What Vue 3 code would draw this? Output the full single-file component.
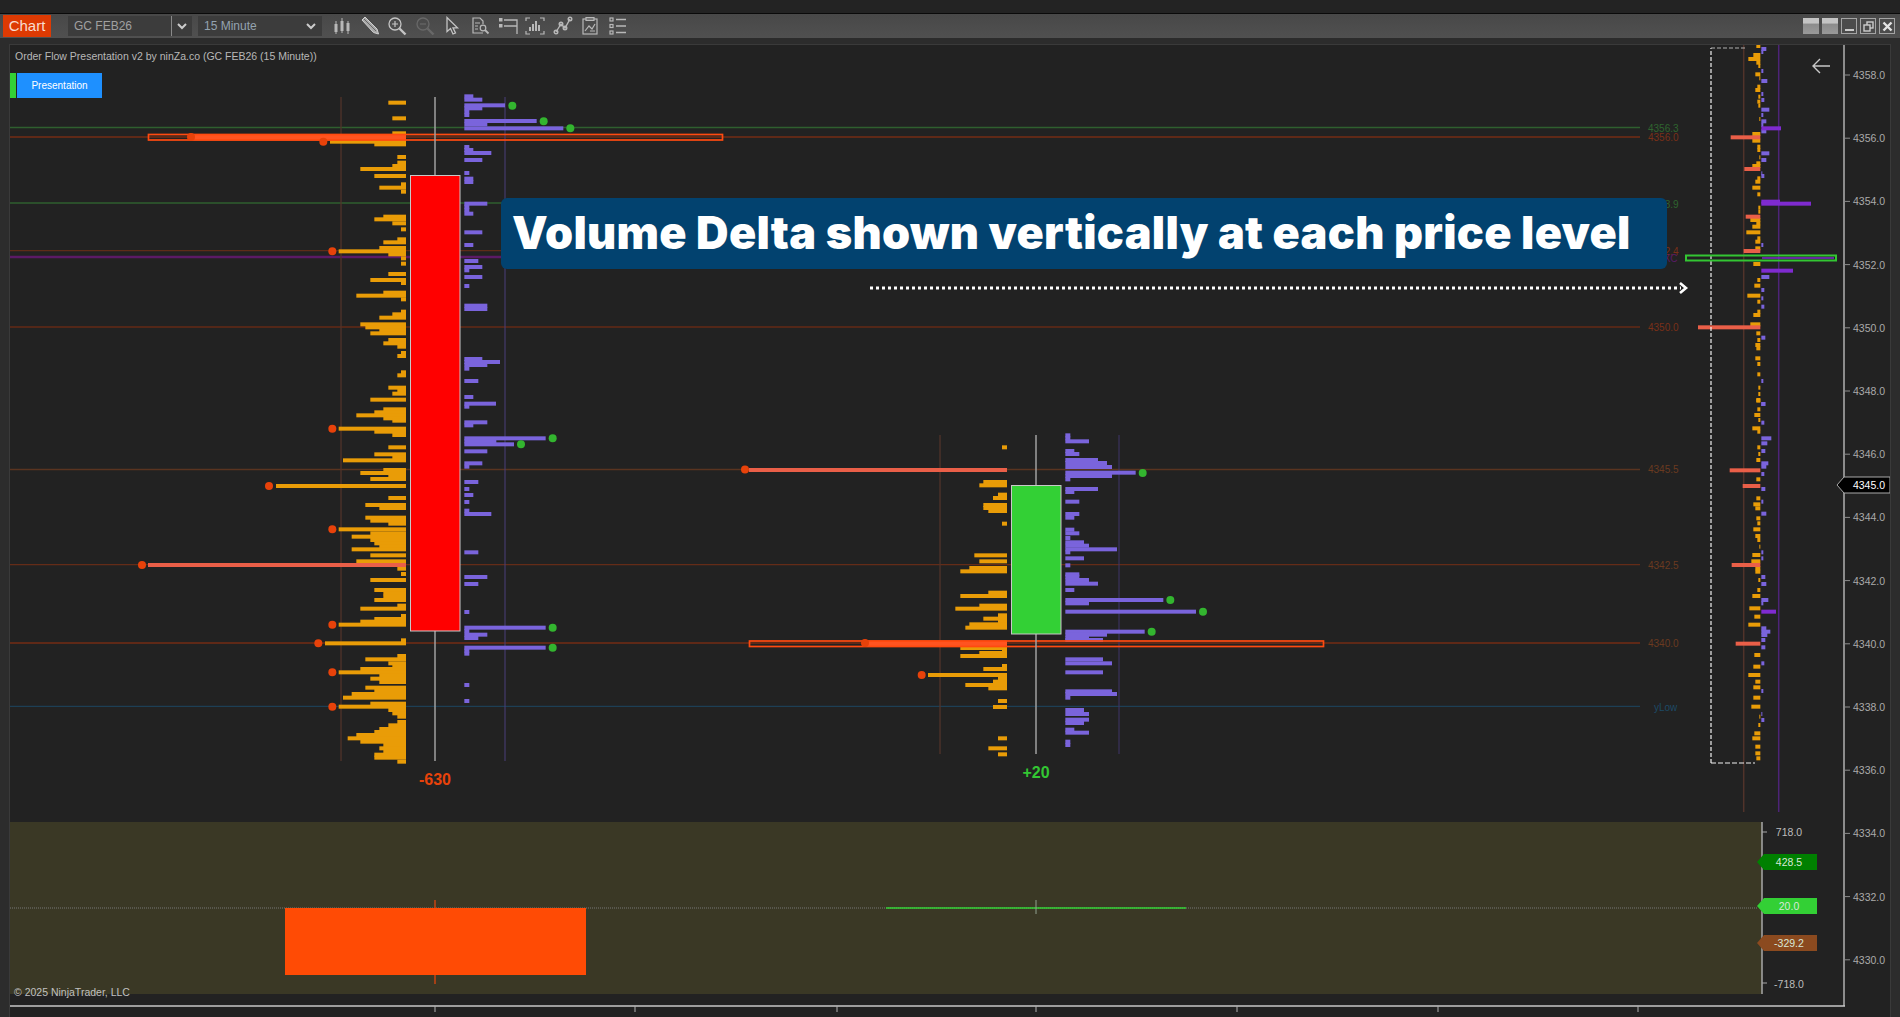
<script setup>
import { computed } from "vue";

// row lists are [y, x] pairs read off a crop, x is the free end of the bar
const toRects = (ox, oy, base, dir, pairs, color) => {
  const out = [];
  for (let i = 0; i < pairs.length; i += 2) {
    const y = oy + pairs[i] / 3;
    const x = ox + pairs[i + 1] / 3;
    const b = ox + base / 3;
    out.push({ x: dir < 0 ? x : b, y: y - 2, w: Math.abs(x - b), h: 4, color });
  }
  return out;
};

const ORANGE = "#e99c07";
const PURPLE = "#7a64dc";
const CORAL = "#ea5f48";
const VIOLET = "#7f2bd0";

const orange1a = [38,265,85,277,130,277,155,90,163,223,201,292,218,292,228,277,237,181,258,223,283,303,293,238,305,303,380,250,388,223,400,277,418,303,448,292,457,250,474,238,484,116,493,265,505,303,521,303,552,265,570,211,579,303,608,250,617,169,628,303,665,303,673,277,683,238,703,181,712,196,721,238,730,211,750,265,760,250,770,292,789,303,798,292,847,303,856,292,893,265,902,292,911,277,929,211,958,250,967,223,976,169,985,250];
const orange1b = [2,277,26,116,35,223,45,277,82,265,103,223,112,277,121,129,150,250,159,181,168,265,177,211,198,-72,234,265,255,196,264,238,293,196,302,211,311,265,328,116,340,211,350,155,360,211,370,223,379,238,388,155,406,211,424,169,446,292,462,303,480,211,510,223,520,250,530,250,540,223,557,292,566,181,588,303,597,223,605,181,614,116,661,303,670,75,708,292,718,196,730,265,738,277,747,181,757,116,766,238,776,211,786,238,803,196,812,223,822,155,833,129,851,211,860,116,870,265,880,277,890,292,906,292,916,265,927,238,936,223,945,169,955,143,965,181,975,250,985,238,995,250,1004,223,1013,223,1025,292];
const purple1a = [19,520,29,547,46,615,55,547,65,508,75,508,93,710,103,562,115,790,171,508,180,520,189,574,210,547,249,508,266,520,276,520,341,562,350,508,360,508,371,520,427,547,465,520,513,535,531,547,541,508,561,547,588,508,647,562,657,562,807,547,816,600,825,562,836,508,873,535,921,520,941,588,950,508,997,562,1006,520];
const purple1b = [55,737,64,589,73,642,94,562,130,547,140,508,186,535,207,508,225,520,246,508,272,508,282,574,397,535,471,562,492,535,576,508,623,737,633,508,644,562,654,535,683,737,692,508,701,508,795,508,843,508];
const orange2 = [82,306,186,250,196,238,224,294,234,279,255,250,264,250,273,265,311,306,406,223,424,238,444,208,454,181,518,265,528,181,557,238,566,166,586,294,596,250,605,294,613,208,623,196,684,181,690,306,699,238,708,181,738,306,747,250,765,84,775,294,785,279,795,196,805,265,843,294,861,279,955,294,985,265,1003,294];
const purple2 = [46,511,55,511,64,567,93,523,102,538,120,594,129,621,141,636,158,707,168,636,178,511,207,594,216,523,245,538,282,538,293,523,329,523,340,538,354,511,367,552,377,567,388,651,397,511,415,552,436,511,463,538,470,538,480,567,491,594,510,523,540,790,550,567,575,888,635,734,644,621,654,567,660,609,718,609,730,636,757,609,814,636,822,651,833,511,870,552,882,567,899,567,909,552,929,523,938,567,965,511,975,511];
const miniOrangeA = [18,229,45,220,57,205,68,229,78,235,103,226,115,238,140,232,150,226,170,235,185,232,197,235,237,238,282,217,302,217,320,232,330,232,352,238,370,229,378,217,415,232,425,226,443,217,463,232,503,235,515,235,540,211,550,229,560,217,577,199,595,232,605,226,625,226,672,220,720,232,737,223,767,202,785,232,815,232,825,220,853,211,880,229,900,232,915,226,925,229,955,226,972,232,1003,232,1043,235,1062,235,1080,229];
const miniOrangeB = [2,229,28,232,45,223,60,235,85,217,95,232,142,232,162,235,180,229,238,229,295,229,313,220,325,226,355,229,370,232,388,220,408,226,420,232,440,238,465,217,484,214,505,226,515,226,540,235,570,232,588,217,625,208,650,223,674,205,765,223,800,220,825,205,845,226,862,220,893,220,920,214,950,238,975,235,1000,223,1015,217,1040,226,1060,226,1075,229];
const miniPurpleA = [27,259,36,250,93,250,123,262,162,250,180,253,209,268,225,250,244,259,255,250,274,259,340,268,360,259,400,247,408,253,615,250,711,268,750,253,775,250,800,253,893,256,1023,250,1092,256];
const miniPurpleB = [12,256,68,253,115,274,130,262,153,256,190,265,200,259,222,253,267,256,305,250,341,259,457,250,475,250,531,256,552,259,600,265,610,250,685,259,695,271,705,262,720,256,742,256,790,253,873,250,942,247,960,253];

const bars = computed(() => [
  ...toRects(300, 90, 318, -1, orange1a, ORANGE),
  ...toRects(300, 420, 318, -1, orange1b, ORANGE),
  ...toRects(300, 90, 493, 1, purple1a, PURPLE),
  ...toRects(300, 420, 493, 1, purple1b, PURPLE),
  ...toRects(900, 420, 321, -1, orange2, ORANGE),
  ...toRects(900, 420, 496, 1, purple2, PURPLE),
  ...toRects(1680, 40, 241, -1, miniOrangeA, ORANGE),
  ...toRects(1680, 400, 241, -1, miniOrangeB, ORANGE),
  ...toRects(1680, 40, 244, 1, miniPurpleA, PURPLE),
  ...toRects(1680, 400, 244, 1, miniPurpleB, PURPLE),
  ...toRects(1680, 40, 241, -1, [292,152,387,193,530,197,633,191,862,54], CORAL),
  ...toRects(1680, 400, 241, -1, [211,149,258,188,495,155,731,167], CORAL),
  ...toRects(1680, 40, 244, 1, [265,303,485,300,491,393,692,339], VIOLET),
  ...toRects(1680, 400, 244, 1, [635,288], VIOLET),
  { x: 148, y: 563, w: 258, h: 4, color: CORAL },
  { x: 749, y: 468, w: 258, h: 4, color: CORAL },
]);

const pts = (ox, oy, list) => {
  const out = [];
  for (let i = 0; i < list.length; i += 2) out.push({ x: ox + list[i] / 3, y: oy + list[i + 1] / 3 });
  return out;
};
const redDots = [
  ...pts(300, 90, [70,155,97,484]),
  ...pts(300, 420, [97,26,97,328,97,614,55,670,97,757,97,860]),
  ...pts(900, 420, [65,765]),
  { x: 142, y: 565 },
  { x: 269, y: 486 },
  { x: 191, y: 137 },
  { x: 865, y: 643 },
  { x: 745, y: 469.5 },
];
const greenDots = [
  ...pts(300, 90, [637,47,731,94,811,115]),
  ...pts(300, 420, [758,55,663,73,758,623,758,683]),
  ...pts(900, 420, [728,159,811,540,909,575,755,635]),
];

const hLines = [
  { y: 127.5, color: "#2f5f2f" },
  { y: 137, color: "#742c14" },
  { y: 203, color: "#2f5f2f" },
  { y: 250.7, color: "#5f2c18" },
  { y: 257, color: "#5b1a66", w: 2.6 },
  { y: 327, color: "#642a16" },
  { y: 469.5, color: "#5a3420" },
  { y: 564.7, color: "#642c18" },
  { y: 643, color: "#742c14" },
  { y: 706.3, color: "#1d3f55" },
];
const lineLabels = [
  { y: 132, t: "4356.3", c: "#2f652f" },
  { y: 141, t: "4356.0", c: "#7a3018" },
  { y: 208, t: "4353.9", c: "#2f652f" },
  { y: 255, t: "4352.4", c: "#7a3018" },
  { y: 262, t: "PXC", c: "#5b1a66", x: 1657 },
  { y: 331, t: "4350.0", c: "#7a3018" },
  { y: 473, t: "4345.5", c: "#6b3a20" },
  { y: 569, t: "4342.5", c: "#6b3a20" },
  { y: 647, t: "4340.0", c: "#6b3a20" },
  { y: 711, t: "yLow", c: "#1d4a66", x: 1654 },
];

const priceTicks = [];
for (let i = 0; i < 15; i++) {
  priceTicks.push({ y: 75 + i * 63.2, t: (4358 - i * 2).toFixed(1) });
}
const timeTicks = [435, 635, 837, 1036, 1237, 1438, 1638];
const tag = (y) => `1764,${y - 8} 1817,${y - 8} 1817,${y + 8} 1764,${y + 8} 1757,${y}`;
</script>

<template>
  <div class="window">
    <div class="topband"></div>
    <div class="toolbar">
      <div class="tab">Chart</div>
      <div class="instrument">
        <span class="instrument-name">GC FEB26</span>
        <span class="instrument-arrow">
          <svg width="10" height="7" viewBox="0 0 10 7"><path d="M1 1l4 4 4-4" fill="none" stroke="#ccc" stroke-width="2" /></svg>
        </span>
      </div>
      <div class="interval">
        <span>15 Minute</span>
        <svg width="10" height="7" viewBox="0 0 10 7"><path d="M1 1l4 4 4-4" fill="none" stroke="#ccc" stroke-width="2" /></svg>
      </div>
      <div class="tools">
        <svg width="20" height="20" viewBox="0 0 20 20" fill="#b8b8b8" stroke="#b8b8b8">
          <path d="M4 5v13M10 2v15M16 5v13" stroke-width="1" /><rect x="2.5" y="8" width="3" height="8" stroke="none" /><rect x="8.5" y="5" width="3" height="10" stroke="none" /><rect x="14.5" y="7" width="3" height="8" stroke="none" />
        </svg>
        <svg width="20" height="20" viewBox="0 0 20 20">
          <path d="M2 4l3-3 12 12 1.5 5-5-1.5z" fill="#a8a8a8" stroke="#d0d0d0" stroke-width="1" /><path d="M4 3l12 12" stroke="#666" stroke-width="1" />
        </svg>
        <svg width="20" height="20" viewBox="0 0 20 20" fill="none" stroke="#c4c4c4">
          <circle cx="8" cy="8" r="6" stroke-width="1.3" /><path d="M5 8h6M8 5v6" stroke-width="1.2" /><path d="M12.5 12.5l6 6" stroke-width="2.4" />
        </svg>
        <svg width="20" height="20" viewBox="0 0 20 20" fill="none" stroke="#686868">
          <circle cx="8" cy="8" r="6" stroke-width="1.3" /><path d="M5 8h6" stroke-width="1.2" /><path d="M12.5 12.5l6 6" stroke-width="2.4" />
        </svg>
        <svg width="20" height="20" viewBox="0 0 20 20">
          <path d="M5 1.5v14l3.5-3 2.5 5.5 2.5-1-2.5-5.2h4.5z" fill="#4a4a4a" stroke="#c4c4c4" stroke-width="1.3" />
        </svg>
        <svg width="20" height="20" viewBox="0 0 20 20" fill="none" stroke="#b8b8b8" stroke-width="1.2">
          <path d="M13 17H3V2h7l3 3v3" /><path d="M5 7h5M5 10h3M5 13h3" /><circle cx="13" cy="12" r="2.8" /><path d="M15 14l3.5 3.5" stroke-width="1.8" />
        </svg>
        <svg width="20" height="20" viewBox="0 0 20 20" fill="none" stroke="#b8b8b8">
          <rect x="1" y="2" width="3.5" height="3.5" fill="#b8b8b8" stroke="none" /><rect x="1" y="8" width="3.5" height="3.5" fill="#b8b8b8" stroke="none" />
          <path d="M6 4h13v14M6 10h13" stroke-width="1.3" />
        </svg>
        <svg width="20" height="20" viewBox="0 0 20 20" fill="none" stroke="#b8b8b8" stroke-width="1.2">
          <path d="M1 5V2h4M15 2h4v3M1 15v3h4M15 18h4v-3" />
          <path d="M5 15v-4M8 15V8M11 15V5M14 15V9" stroke-width="2" />
        </svg>
        <svg width="20" height="20" viewBox="0 0 20 20" fill="none" stroke="#b8b8b8" stroke-width="1.4">
          <path d="M3 16l5-8 4 4 5-9" /><circle cx="3" cy="16" r="1.8" /><circle cx="8" cy="8" r="1.8" /><circle cx="12" cy="12" r="1.8" /><circle cx="17" cy="3" r="1.8" />
        </svg>
        <svg width="20" height="20" viewBox="0 0 20 20" fill="none" stroke="#b8b8b8" stroke-width="1.2">
          <rect x="3" y="3" width="14" height="15" /><path d="M6 1.5h8v3H6z" fill="#777" /><path d="M5 15l4-5 3 3 3-5M10 15h5" />
        </svg>
        <svg width="20" height="20" viewBox="0 0 20 20" fill="none" stroke="#b8b8b8" stroke-width="1.2">
          <rect x="2" y="2" width="3" height="3" /><rect x="2" y="8.5" width="3" height="3" /><rect x="2" y="15" width="3" height="3" /><path d="M8 3.5h10M8 10h10M8 16.5h10" stroke-width="1.5" />
        </svg>
      </div>
      <div class="win-buttons">
        <span class="win-btn blank"></span>
        <span class="win-btn blank"></span>
        <span class="win-btn">
          <svg width="11" height="11" viewBox="0 0 11 11"><path d="M1 9h9" stroke="#ccc" stroke-width="2" /></svg>
        </span>
        <span class="win-btn">
          <svg width="11" height="11" viewBox="0 0 11 11" fill="none" stroke="#ccc" stroke-width="1.4"><rect x="4" y="1" width="6" height="6" /><rect x="1" y="4" width="6" height="6" fill="#4c4c4c" /></svg>
        </span>
        <span class="win-btn">
          <svg width="11" height="11" viewBox="0 0 11 11"><path d="M1.5 1.5l8 8M9.5 1.5l-8 8" stroke="#e4e4e4" stroke-width="2.4" /></svg>
        </span>
      </div>
    </div>

    <div class="chart">
      <svg class="canvas" viewBox="10 45 1880 972" width="1880" height="972">
        <!-- level lines -->
        <line v-for="l in hLines" :key="l.y" x1="10" x2="1640" :y1="l.y" :y2="l.y" :stroke="l.color" :stroke-width="l.w || 1.3" />
        <text v-for="l in lineLabels" :key="l.t" :x="l.x || 1648" :y="l.y" :fill="l.c" class="lvl">{{ l.t }}</text>

        <!-- profile guides -->
        <line x1="341" x2="341" y1="97" y2="761" stroke="#51332a" stroke-width="1.3" />
        <line x1="505" x2="505" y1="97" y2="761" stroke="#4a3f7a" />
        <line x1="940" x2="940" y1="435" y2="754" stroke="#51332a" stroke-width="1.3" />
        <line x1="1119" x2="1119" y1="435" y2="754" stroke="#3f3468" />
        <line x1="1743.7" x2="1743.7" y1="45" y2="812" stroke="#51332a" stroke-width="1.5" />
        <line x1="1778.7" x2="1778.7" y1="45" y2="812" stroke="#4d2478" stroke-width="1.5" />

        <rect v-for="(b, i) in bars" :key="i" :x="b.x" :y="b.y" :width="b.w" :height="b.h" :fill="b.color" />

        <!-- high volume rows -->
        <rect x="191" y="134.5" width="215" height="6" fill="#ff5420" />
        <rect x="148.5" y="134.5" width="574" height="5.5" fill="none" stroke="#ff4a10" stroke-width="1.7" />
        <rect x="865" y="640.5" width="142" height="6" fill="#ff5420" />
        <rect x="749.5" y="641" width="574" height="5.5" fill="none" stroke="#ff4a10" stroke-width="1.7" />

        <circle v-for="(d, i) in redDots" :key="'r' + i" :cx="d.x" :cy="d.y" r="4" fill="#e8420a" />
        <circle v-for="(d, i) in greenDots" :key="'g' + i" :cx="d.x" :cy="d.y" r="4" fill="#33b52f" />

        <!-- candles -->
        <line x1="435" x2="435" y1="97" y2="761" stroke="#a0a0a0" stroke-width="1.5" />
        <rect x="410.5" y="175.5" width="49.5" height="455.5" fill="#ff0000" stroke="#c8c8c8" />
        <line x1="1036" x2="1036" y1="435" y2="754" stroke="#a0a0a0" stroke-width="1.5" />
        <rect x="1011.5" y="485.5" width="49.5" height="148.5" fill="#33d035" stroke="#c8c8c8" />
        <text x="435" y="785" class="delta" fill="#e8420a">-630</text>
        <text x="1036" y="778" class="delta" fill="#33c633">+20</text>

        <!-- mini profile frame -->
        <path d="M1711 763V48" fill="none" stroke="#f2f2f2" stroke-width="1.2" stroke-dasharray="4 2" />
        <path d="M1711 48H1747" fill="none" stroke="#b0b0b0" stroke-width="1.2" stroke-dasharray="4 2" />
        <path d="M1711 763H1755" fill="none" stroke="#f2f2f2" stroke-width="1.2" stroke-dasharray="5 2" />
        <rect x="1686" y="255.5" width="150" height="5" fill="none" stroke="#33c633" stroke-width="2" />
        <line x1="1762" x2="1834" y1="258" y2="258" stroke="#7f2bd0" stroke-width="1.5" />

        <!-- pointer -->
        <line x1="870" x2="1681" y1="288" y2="288" stroke="#fff" stroke-width="3" stroke-dasharray="3 3" />
        <path d="M1680 283l6 5-6 5" fill="none" stroke="#fff" stroke-width="2.6" />
        <path d="M1830 66h-17M1820 59l-7 7 7 7" fill="none" stroke="#c8c8c8" stroke-width="1.4" />

        <!-- price axis -->
        <line x1="1844" x2="1844" y1="45" y2="1006" stroke="#8c8c8c" stroke-width="2" />
        <g v-for="p in priceTicks" :key="p.t">
          <line x1="1845" x2="1850" :y1="p.y" :y2="p.y" stroke="#8c8c8c" />
          <text x="1853" :y="p.y + 4" class="axis">{{ p.t }}</text>
        </g>
        <polygon points="1844,477 1890,477 1890,493 1844,493 1837,485" fill="#000" stroke="#a8a8a8" />
        <text x="1869" y="489" class="tag">4345.0</text>

        <!-- indicator panel -->
        <rect x="10" y="822" width="1752" height="172" fill="#3a3825" />
        <line x1="10" x2="1757" y1="908" y2="908" stroke="#777" stroke-dasharray="1 1" />
        <line x1="435" x2="435" y1="900" y2="984" stroke="#c94310" stroke-width="1.5" />
        <rect x="285" y="908" width="301" height="67" fill="#ff4b05" />
        <line x1="886" x2="1186" y1="908" y2="908" stroke="#33d035" stroke-width="1.5" />
        <line x1="1036" x2="1036" y1="900" y2="914" stroke="#8fa08f" />
        <line x1="1762" x2="1762" y1="822" y2="994" stroke="#a8a8a8" stroke-width="1.5" />
        <line x1="1762" x2="1767" y1="832" y2="832" stroke="#a8a8a8" />
        <line x1="1762" x2="1767" y1="983" y2="983" stroke="#a8a8a8" />
        <text x="1789" y="836" class="tag muted">718.0</text>
        <text x="1789" y="988" class="tag muted">-718.0</text>
        <polygon :points="tag(862)" fill="#008000" />
        <text x="1789" y="866" class="tag soft">428.5</text>
        <polygon :points="tag(906)" fill="#33d035" />
        <text x="1789" y="910" class="tag soft">20.0</text>
        <polygon :points="tag(943)" fill="#8b4a1f" />
        <text x="1789" y="947" class="tag soft">-329.2</text>

        <!-- time axis -->
        <line x1="10" x2="1845" y1="1006" y2="1006" stroke="#c8c8c8" stroke-width="1.5" />
        <line v-for="t in timeTicks" :key="t" :x1="t" :x2="t" y1="1006" y2="1012" stroke="#b0b0b0" />
      </svg>

      <div class="title">Order Flow Presentation v2 by ninZa.co (GC FEB26 (15 Minute))</div>
      <div class="preset">
        <span class="preset-state"></span>
        <span class="preset-btn">Presentation</span>
      </div>
      <div class="callout">Volume Delta shown vertically at each price level</div>
      <div class="copyright">© 2025 NinjaTrader, LLC</div>
    </div>
  </div>
</template>

<style scoped>
.window {
  display: flex;
  flex-direction: column;
  width: 1900px;
  height: 1017px;
  overflow: hidden;
  background: #2c2c2c;
  font-family: "Liberation Sans", Arial, sans-serif;
}
.topband {
  height: 13px;
  background: #232323;
  border-bottom: 1px solid #0a0a0a;
}
.toolbar {
  display: flex;
  align-items: center;
  height: 24px;
  padding-left: 3px;
  background: linear-gradient(#484848, #505050);
}
.tab {
  width: 48px;
  height: 22px;
  line-height: 22px;
  text-align: center;
  font-size: 15px;
  color: #f8dcd0;
  background: #dd3a03;
}
.instrument {
  display: flex;
  align-items: center;
  width: 124px;
  height: 20px;
  margin-left: 17px;
  background: #3c3c3c;
}
.instrument-name {
  flex: 1;
  padding-left: 6px;
  font-size: 12px;
  color: #a0a0a0;
}
.instrument-arrow {
  display: flex;
  align-items: center;
  justify-content: center;
  width: 20px;
  height: 20px;
  border-left: 1px solid #8a8a8a;
}
.interval {
  display: flex;
  align-items: center;
  justify-content: space-between;
  width: 124px;
  height: 20px;
  margin-left: 6px;
  padding: 0 6px;
  box-sizing: border-box;
  font-size: 12px;
  color: #94a3b0;
  background: #3c3c3c;
}
.tools {
  display: flex;
  align-items: center;
  gap: 7.6px;
  margin-left: 10px;
}
.win-buttons {
  display: flex;
  gap: 3px;
  margin-left: auto;
  margin-right: 5px;
}
.win-btn {
  display: flex;
  align-items: center;
  justify-content: center;
  width: 16px;
  height: 16px;
  box-sizing: border-box;
  border: 1px solid #a4a4a4;
  background: #4c4c4c;
}
.win-btn.blank {
  border: none;
  background: linear-gradient(#c4c4c4 30%, #8c8c8c 40%, #9a9a9a);
}
.chart {
  position: relative;
  flex: 1;
  margin: 6px 9px 0;
  border: 1px solid #3a3a3a;
  border-bottom: none;
  background: #222222;
}
.canvas {
  display: block;
}
.lvl {
  font-size: 10px;
}
.axis {
  font-size: 10.5px;
  fill: #aaaaaa;
}
.tag {
  font-size: 10.5px;
  fill: #ffffff;
  text-anchor: middle;
}
.tag.muted {
  fill: #bdbdbd;
}
.tag.soft {
  fill: #d8e8d8;
}
.delta {
  font-size: 16px;
  font-weight: 700;
  text-anchor: middle;
}
.title {
  position: absolute;
  left: 5px;
  top: 5px;
  font-size: 10.5px;
  line-height: 13px;
  color: #b8b8b8;
}
.preset {
  position: absolute;
  left: 0;
  top: 28px;
  display: flex;
  gap: 1px;
  height: 25px;
}
.preset-state {
  width: 6px;
  background: #33d035;
}
.preset-btn {
  width: 85px;
  line-height: 25px;
  text-align: center;
  font-size: 10px;
  color: #fff;
  background: #1e90ff;
}
.callout {
  position: absolute;
  left: 491px;
  top: 153px;
  width: 1166px;
  height: 71px;
  box-sizing: border-box;
  padding-left: 11px;
  border-radius: 6px;
  line-height: 69px;
  white-space: nowrap;
  font-family: Inter, "Liberation Sans", sans-serif;
  font-size: 45px;
  font-weight: 900;
  letter-spacing: 0.3px;
  color: #fff;
  background: #02426f;
}
.copyright {
  position: absolute;
  left: 4px;
  top: 941px;
  font-size: 10.5px;
  line-height: 13px;
  color: #c0c0c0;
}
</style>
